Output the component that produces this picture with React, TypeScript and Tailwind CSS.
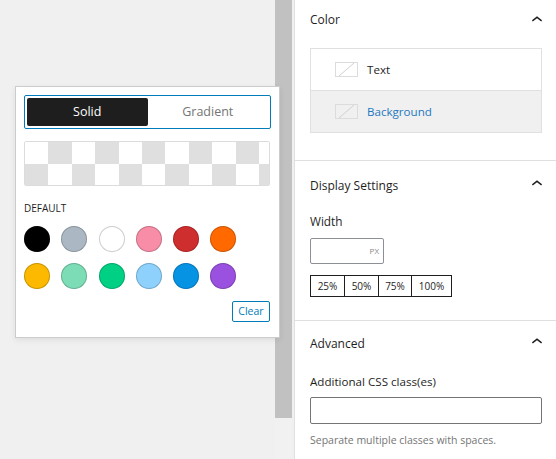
import React from "react";

const ChevronUp = () => (
  <svg width="22" height="22" viewBox="0 0 24 24" className="shrink-0">
    <path d="M6.5 12.4L12 8l5.5 4.4-.9 1.2L12 10l-4.6 3.6-.9-1.2z" fill="#1e1e1e" />
  </svg>
);

const EmptySwatch = () => (
  <svg width="23" height="15" viewBox="0 0 23 15" className="shrink-0">
    <rect x="0.5" y="0.5" width="22" height="14" fill="none" stroke="#dcdcdc" />
    <line x1="4" y1="14" x2="19" y2="1" stroke="#d0d0d0" strokeWidth="1" />
  </svg>
);

const swatches = [
  "#000000",
  "#abb8c3",
  "#ffffff",
  "#f78da7",
  "#cf2e2e",
  "#ff6900",
  "#fcb900",
  "#7bdcb5",
  "#00d084",
  "#8ed1fc",
  "#0693e3",
  "#9b51e0",
];

function Checker() {
  const rows = [0, 1];
  const cols = Array.from({ length: 11 }, (_, i) => i);
  return (
    <div className="w-[246px] h-[45px] border border-[#dcdcdc] rounded-[2px] overflow-hidden flex flex-col">
      {rows.map((r) => (
        <div key={r} className="flex flex-1">
          {cols.map((c) => (
            <div
              key={c}
              className={
                (r + c) % 2 === 1
                  ? "w-[23.4px] shrink-0 bg-[#dfdfdf]"
                  : "w-[23.4px] shrink-0 bg-white"
              }
            />
          ))}
        </div>
      ))}
    </div>
  );
}

export default function App() {
  return (
    <div className="relative flex w-[556px] h-[459px] overflow-hidden font-['Open_Sans',sans-serif] text-[#1e1e1e]">
      {/* left canvas */}
      <div className="w-[275px] h-full bg-[#f0f0f0]" />
      {/* scrollbar */}
      <div className="w-[17px] h-full bg-[#f1f1f1] flex flex-col">
        <div className="h-[418px] bg-[#c1c1c1]" />
      </div>
      <div className="w-[2px] h-full bg-[#f0f0f0]" />
      {/* sidebar */}
      <div className="flex-1 h-full bg-white border-l border-[#e0e0e0] flex flex-col">
        {/* Color section */}
        <div className="flex flex-col px-[15px] pr-[14px] border-b border-[#e0e0e0] h-[161px]">
          <div className="h-[40px] flex items-center justify-between">
            <span className="text-[12px] font-medium">Color</span>
            <span className="mr-[-6px]"><ChevronUp /></span>
          </div>
          <div className="mt-[8px] border border-[#e0e0e0] flex flex-col">
            <div className="h-[41px] flex items-center pl-[24px] gap-[9px]">
              <EmptySwatch />
              <span className="text-[11.6px]">Text</span>
            </div>
            <div className="h-[42px] flex items-center pl-[24px] gap-[9px] bg-[#f0f0f0] border-t border-[#e0e0e0]">
              <EmptySwatch />
              <span className="text-[11.6px] text-[#1f78c1]">Background</span>
            </div>
          </div>
        </div>
        {/* Display settings */}
        <div className="flex flex-col px-[15px] pr-[14px] border-b border-[#e0e0e0] h-[160px]">
          <div className="h-[50px] flex items-center justify-between">
            <span className="text-[12px] font-medium">Display Settings</span>
            <span className="mr-[-6px] mt-[-4px]"><ChevronUp /></span>
          </div>
          <div className="mt-[3px] h-[16px] flex items-center text-[11.8px]">Width</div>
          <div className="mt-[8px] w-[74px] h-[26px] border border-[#8c8f94] rounded-[2px] flex items-center justify-end pr-[4px]">
            <span className="text-[8px] text-[#8a8a8a]">PX</span>
          </div>
          <div className="mt-[11px] flex h-[22px] w-fit border border-[#1e1e1e]">
            <div className="w-[33px] flex items-center justify-center text-[10px]">25%</div>
            <div className="w-[34px] flex items-center justify-center text-[10px] border-l border-[#1e1e1e]">50%</div>
            <div className="w-[33px] flex items-center justify-center text-[10px] border-l border-[#1e1e1e]">75%</div>
            <div className="w-[40px] flex items-center justify-center text-[10px] border-l border-[#1e1e1e]">100%</div>
          </div>
        </div>
        {/* Advanced */}
        <div className="flex flex-col px-[15px] pr-[14px] flex-1">
          <div className="h-[46px] flex items-center justify-between">
            <span className="text-[12px] font-medium">Advanced</span>
            <span className="mr-[-6px] mt-[-4px]"><ChevronUp /></span>
          </div>
          <div className="mt-[7px] h-[16px] flex items-center text-[11.6px]">Additional CSS class(es)</div>
          <div className="mt-[7px] h-[27px] border border-[#757575] rounded-[2px]" />
          <div className="mt-[9px] text-[10.5px] text-[#757575] leading-[15px]">Separate multiple classes with spaces.</div>
        </div>
      </div>

      {/* popover */}
      <div className="absolute left-[15px] top-[86px] w-[265px] h-[252px] bg-white border border-[#cccccc] shadow-[0_2px_6px_rgba(0,0,0,0.08)] px-[8px] pt-[8px] flex flex-col">
        <div className="w-[247px] h-[34px] border border-[#007cba] rounded-[2px] p-[2px] flex">
          <div className="flex-1 bg-[#1e1e1e] rounded-[2px] flex items-center justify-center text-white text-[12.5px] font-medium">Solid</div>
          <div className="flex-1 flex items-center justify-center text-[#757575] text-[12.5px]">Gradient</div>
        </div>
        <div className="mt-[12px]">
          <Checker />
        </div>
        <div className="mt-[15px] text-[10px] font-medium uppercase leading-[14px]">Default</div>
        <div className="mt-[11px] grid grid-cols-[repeat(6,26px)] gap-x-[11.3px] gap-y-[11px]">
          {swatches.map((c) => (
            <div
              key={c}
              className="w-[26px] h-[26px] rounded-full shadow-[inset_0_0_0_1px_rgba(0,0,0,0.2)]"
              style={{ backgroundColor: c }}
            />
          ))}
        </div>
        <div className="mt-[12px] flex justify-end pr-[1px]">
          <div className="w-[38px] h-[21px] border border-[#007cba] rounded-[2px] flex items-center justify-center text-[10.5px] text-[#007cba]">Clear</div>
        </div>
      </div>
    </div>
  );
}
